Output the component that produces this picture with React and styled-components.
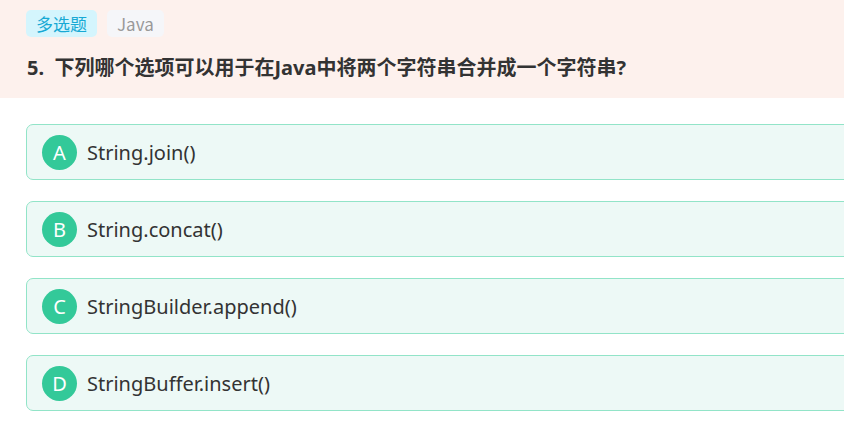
import styled, { createGlobalStyle } from "styled-components";

const GlobalStyle = createGlobalStyle`
  html, body {
    margin: 0;
    padding: 0;
    background: #ffffff;
    overflow: hidden;
  }
  body {
    font-family: "Noto Sans", "Noto Sans CJK SC", sans-serif;
  }
`;

const Page = styled.div`
  width: 844px;
  height: 429px;
  overflow: hidden;
`;

const Header = styled.header`
  background-color: #fdf1ed;
  padding: 10px 26px 0;
  height: 88px;
`;

const Tags = styled.div`
  display: flex;
  gap: 10px;
`;

const Tag = styled.span`
  display: inline-flex;
  align-items: center;
  justify-content: center;
  height: 27px;
  padding: 0 10px;
  border-radius: 5px;
  font-size: 17px;
  font-family: "Noto Sans CJK SC", "Noto Sans", sans-serif;
  background-color: ${(p) => (p.$kind === "type" ? "#d4f5fd" : "#f5f6f9")};
  color: ${(p) => (p.$kind === "type" ? "#17a9d4" : "#999999")};
`;

const Question = styled.h1`
  margin: 17px 0 0 1px;
  font-size: 20px;
  font-weight: 700;
  color: #333333;
  line-height: 28px;
  font-family: "Noto Sans", "Noto Sans CJK SC", sans-serif;
`;

const Options = styled.div`
  display: flex;
  flex-direction: column;
  gap: 21px;
  padding: 26px 0 0 26px;
`;

const Option = styled.div`
  display: flex;
  align-items: center;
  gap: 10px;
  box-sizing: border-box;
  width: 840px;
  height: 56px;
  padding: 0 15px;
  border: 1px solid #92e4c8;
  border-radius: 7px;
  background-color: #edf9f6;
`;

const Badge = styled.span`
  display: flex;
  align-items: center;
  justify-content: center;
  width: 35px;
  height: 35px;
  border-radius: 50%;
  background-color: #33c999;
  color: #ffffff;
  font-size: 20px;
  flex-shrink: 0;
`;

const Label = styled.span`
  font-size: 20px;
  color: #333333;
`;

const options = [
  { key: "A", text: "String.join()" },
  { key: "B", text: "String.concat()" },
  { key: "C", text: "StringBuilder.append()" },
  { key: "D", text: "StringBuffer.insert()" },
];

const App = () => {
  return (
    <Page>
      <GlobalStyle />
      <Header>
        <Tags>
          <Tag $kind="type">多选题</Tag>
          <Tag>Java</Tag>
        </Tags>
        <Question>5.&nbsp;&nbsp;下列哪个选项可以用于在Java中将两个字符串合并成一个字符串?</Question>
      </Header>
      <Options>
        {options.map((o) => (
          <Option key={o.key}>
            <Badge>{o.key}</Badge>
            <Label>{o.text}</Label>
          </Option>
        ))}
      </Options>
    </Page>
  );
};

export default App;
